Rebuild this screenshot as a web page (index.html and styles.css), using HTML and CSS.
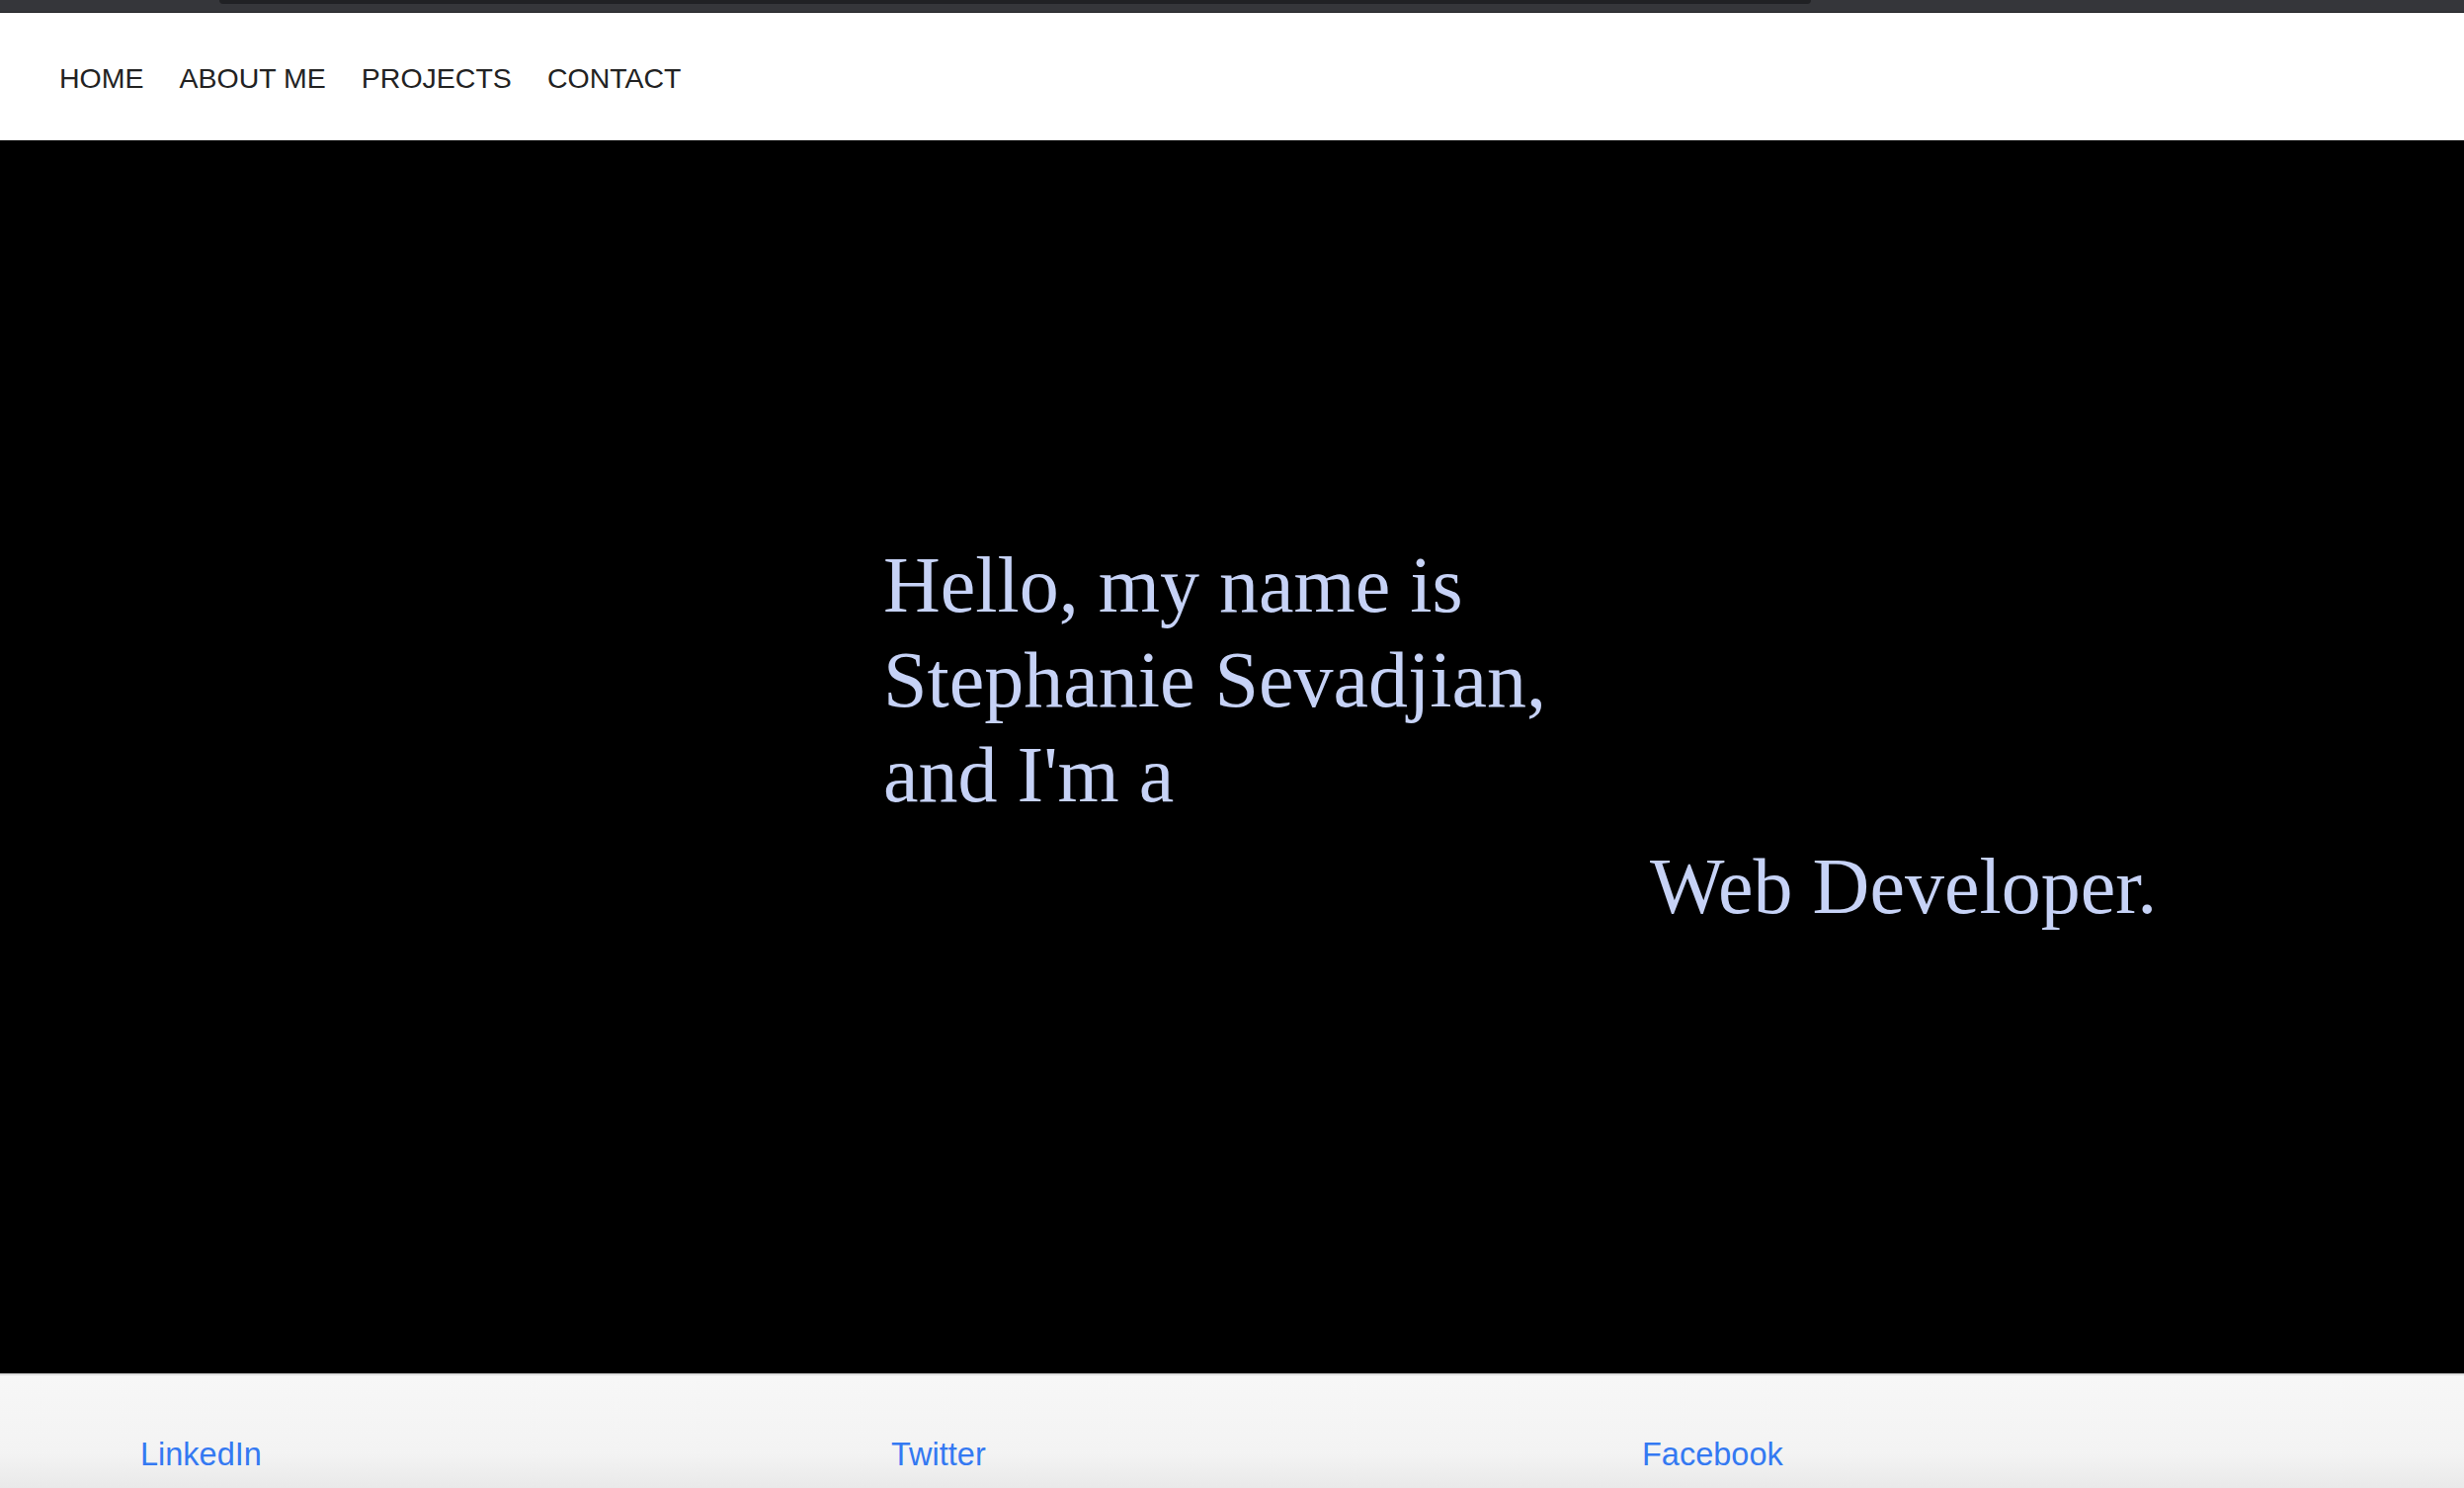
FILE: index.html
```html
<!DOCTYPE html>
<html lang="en">
<head>
<meta charset="utf-8">
<title>Stephanie Sevadjian</title>
<link rel="stylesheet" href="styles.css">
</head>
<body>
<div class="chrome"><div class="chrome-tab"></div></div>
<nav class="nav">
  <a class="nav-link" href="#">HOME</a>
  <a class="nav-link" href="#">ABOUT ME</a>
  <a class="nav-link" href="#">PROJECTS</a>
  <a class="nav-link" href="#">CONTACT</a>
</nav>
<main class="hero">
  <h1 class="intro">Hello, my name is Stephanie Sevadjian, and I'm a</h1>
  <p class="role">Web Developer.</p>
</main>
<footer class="footer">
  <a class="social" href="#">LinkedIn</a>
  <a class="social" href="#">Twitter</a>
  <a class="social" href="#">Facebook</a>
</footer>
</body>
</html>
```

FILE: styles.css
```css
html, body {
  margin: 0;
  padding: 0;
  background: #ffffff;
}
body {
  width: 2494px;
  height: 1506px;
  overflow: hidden;
  display: flex;
  flex-direction: column;
}
.chrome {
  height: 12px;
  background: #35363a;
  border-bottom: 1px solid #202124;
  display: flex;
  flex-shrink: 0;
}
.chrome-tab {
  margin-left: 222px;
  width: 1611px;
  height: 4px;
  background: #202124;
  border-radius: 0 0 8px 8px;
}
.nav {
  height: 129px;
  box-sizing: border-box;
  padding: 50px 0 0 60px;
  display: flex;
  gap: 36px;
  background: #ffffff;
  flex-shrink: 0;
}
.nav-link {
  font-family: "Liberation Sans", Arial, sans-serif;
  font-size: 28.5px;
  line-height: 32px;
  color: #222222;
  text-decoration: none;
}
.hero {
  height: 1248px;
  box-sizing: border-box;
  background: #000000;
  display: flex;
  align-items: flex-start;
  padding: 402px 0 0 894px;
  flex-shrink: 0;
  font-family: "Liberation Serif", "Times New Roman", serif;
  color: #c6d2f6;
}
.intro {
  margin: 0;
  width: 776px;
  font-size: 80px;
  line-height: 96px;
  font-weight: normal;
}
.role {
  margin: 305px 0 0 0;
  font-size: 80px;
  line-height: 96px;
  white-space: nowrap;
}
.footer {
  flex: 1;
  border-top: 2px solid #dcdcdc;
  background: linear-gradient(#f7f7f7, #f3f3f3 70%, #e9e9e9);
  display: flex;
  padding: 62px 0 0 142px;
}
.social {
  width: 760px;
  font-family: "Liberation Sans", Arial, sans-serif;
  font-size: 32.5px;
  line-height: 37px;
  height: 37px;
  color: #3479f2;
  text-decoration: none;
}
```
